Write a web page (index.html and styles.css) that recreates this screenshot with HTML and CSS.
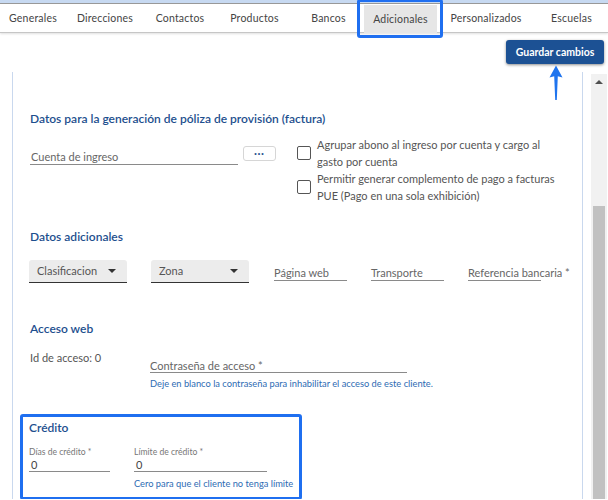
FILE: index.html
```html
<!DOCTYPE html>
<html lang="es">

<head>
    <meta charset="UTF-8">
    <meta name="viewport" content="width=device-width, initial-scale=1.0">
    <title>Cliente - Adicionales</title>
    <link rel="stylesheet" href="styles.css">
</head>

<body>
    <div class="topstrip"></div>
    <nav class="tabs">
        <a class="tab">Generales</a>
        <a class="tab">Direcciones</a>
        <a class="tab">Contactos</a>
        <a class="tab">Productos</a>
        <a class="tab">Bancos</a>
        <a class="tab active">Adicionales</a>
        <a class="tab">Personalizados</a>
        <a class="tab">Escuelas</a>
    </nav>

    <div class="toolbar">
        <button class="save">Guardar cambios</button>
        <svg class="pointer" width="16" height="36" viewBox="0 0 16 36">
            <path d="M8 0.5 L14.5 12.5 L9.8 11.2 L8.8 35 L7.2 35 L6.2 11.2 L1.5 12.5 Z" fill="#1f74ee" />
        </svg>
    </div>

    <div class="workarea">
        <div class="panel">
            <h2 class="section-title">Datos para la generación de póliza de provisión (factura)</h2>
            <div class="row poliza">
                <div class="field cuenta"><span>Cuenta de ingreso</span></div>
                <button class="dots">&bull;&bull;&bull;</button>
                <div class="checks">
                    <label class="check"><span class="box"></span><span>Agrupar abono al ingreso por cuenta y cargo al gasto por cuenta</span></label>
                    <label class="check"><span class="box"></span><span>Permitir generar complemento de pago a facturas PUE (Pago en una sola exhibición)</span></label>
                </div>
            </div>

            <h2 class="section-title adicionales">Datos adicionales</h2>
            <div class="row extras">
                <div class="select">Clasificacion <span class="caret"></span></div>
                <div class="select">Zona <span class="caret"></span></div>
                <div class="field short"><span>Página web</span></div>
                <div class="field short"><span>Transporte</span></div>
                <div class="field short"><span>Referencia bancaria *</span></div>
            </div>

            <h2 class="section-title acceso-title">Acceso web</h2>
            <div class="row acceso">
                <div class="id">Id de acceso: 0</div>
                <div class="pass">
                    <div class="field password"><span>Contraseña de acceso *</span></div>
                    <p class="hint">Deje en blanco la contraseña para inhabilitar el acceso de este cliente.</p>
                </div>
            </div>

            <section class="credito">
                <h2 class="section-title">Crédito</h2>
                <div class="row">
                    <div class="small-field dias">
                        <label>Días de crédito *</label>
                        <div class="value">0</div>
                    </div>
                    <div class="small-field limite">
                        <label>Límite de crédito *</label>
                        <div class="value">0</div>
                        <p class="hint">Cero para que el cliente no tenga límite</p>
                    </div>
                </div>
            </section>
        </div>
        <div class="scrollbar">
            <span class="up"></span>
            <span class="thumb"></span>
        </div>
    </div>
</body>

</html>
```

FILE: styles.css
```css
* {
    margin: 0px;
    padding: 0px;
    box-sizing: border-box;
}

body {
    font-family: Lato, "Open Sans", sans-serif;
    font-size: 11px;
    color: #555;
    background-color: white;
    overflow: hidden;
}

.topstrip {
    height: 4px;
    background-color: #c7d9f1;
    border-bottom: 1px solid #9a9a9a;
}

.tabs {
    display: grid;
    grid-template-columns: 66px 78px 72px 77px 71px 73px 98px 73px;
    height: 29px;
    border-bottom: 1px solid #c6c6c6;
    box-shadow: 0 1px 2px rgba(0, 0, 0, 0.12);
}

.tab {
    text-align: center;
    line-height: 28px;
    font-size: 10.5px;
    color: #444;
    letter-spacing: 0.2px;
}

.tab.active {
    position: relative;
    background-color: #e6e6e6;
    margin-top: 1px;
}

/* highlight around the active tab */
.tab.active::after {
    content: "";
    position: absolute;
    left: -7px;
    right: -6px;
    top: -6px;
    bottom: -5px;
    border: 3px solid #1f6ff0;
    border-radius: 3px;
}

.toolbar {
    position: relative;
    display: flex;
    justify-content: flex-end;
    padding: 7px 4px 8px 0;
}

.save {
    width: 98px;
    height: 24px;
    border: none;
    border-radius: 3px;
    background-color: #1c5194;
    color: white;
    font-family: Lato, sans-serif;
    font-weight: bold;
    font-size: 10.5px;
    box-shadow: 0 1px 3px rgba(0, 0, 0, 0.45);
}

.pointer {
    position: absolute;
    left: 548px;
    top: 32px;
}

.workarea {
    display: flex;
    height: 427px;
    overflow: hidden;
}

.panel {
    width: 571px;
    margin-left: 12px;
    border-left: 1px solid #c9d8ee;
    border-right: 1px solid #c9d8ee;
    padding: 39px 10px 0 17px;
}

.section-title {
    font-size: 12px;
    font-weight: 600;
    line-height: 16px;
    color: #1d4f8e;
}

.row {
    display: flex;
}

.poliza {
    margin-top: 9px;
}

.field {
    border-bottom: 1px solid #8a8a8a;
    line-height: 14px;
    color: #666;
    white-space: nowrap;
}

.cuenta {
    width: 208px;
    height: 29px;
    padding: 14px 0 0 1px;
    align-self: flex-start;
}

.dots {
    width: 33px;
    height: 15px;
    margin: 10px 0 0 5px;
    border: 1px solid #d6d6d6;
    border-radius: 3px;
    background-color: white;
    color: #1d4f8e;
    font-size: 7px;
    letter-spacing: 1px;
}

.checks {
    margin-left: 21px;
}

.check {
    display: flex;
    align-items: center;
    width: 260px;
    line-height: 17px;
    color: #555;
}

.check .box {
    flex: none;
    width: 14px;
    height: 14px;
    border: 1px solid #555;
    border-radius: 2px;
    margin-right: 6px;
}

.adicionales {
    margin-top: 25px;
}

.extras {
    margin-top: 15px;
    gap: 24px;
    align-items: flex-start;
}

.select {
    position: relative;
    width: 98px;
    height: 23px;
    margin-left: -1px;
    padding-left: 8px;
    line-height: 22px;
    background-color: #ececec;
    border-bottom: 1px solid #333;
    border-radius: 3px 3px 0 0;
    color: #555;
}

.select + .select {
    margin-left: 0;
}

.caret {
    position: absolute;
    right: 11px;
    top: 9px;
    border-left: 4px solid transparent;
    border-right: 4px solid transparent;
    border-top: 4px solid #333;
}

.short {
    width: 73px;
    height: 21px;
    padding-top: 6px;
    margin-left: 1px;
}

.short + .short {
    margin-left: 0;
}

.acceso-title {
    margin-top: 38px;
}

.acceso {
    margin-top: 13px;
}

.id {
    width: 120px;
    line-height: 16px;
    color: #555;
}

.password {
    width: 257px;
    height: 23px;
    padding-top: 9px;
}

.hint {
    margin-top: 5px;
    font-size: 9.3px;
    line-height: 12px;
    color: #2d6bb3;
    white-space: nowrap;
}

.credito {
    width: 282px;
    margin: 24px 0 0 -10px;
    padding: 3px 6px 7px 6px;
    border: 3px solid #1f6ff0;
    border-radius: 3px;
}

.credito .row {
    gap: 24px;
    margin-top: 11px;
}

.small-field label {
    display: block;
    font-size: 8.6px;
    line-height: 11px;
    color: #777;
}

.small-field .value {
    border-bottom: 1px solid #8a8a8a;
    padding: 1px 0 0 2px;
    line-height: 12px;
    font-size: 11px;
    color: #444;
}

.dias {
    width: 81px;
}

.limite {
    width: 133px;
}

.credito .hint {
    margin-top: 6px;
    font-size: 9.3px;
}

.scrollbar {
    position: relative;
    width: 16px;
    margin: 2px 0 0 8px;
    background-color: #f1f1f1;
}

.up {
    position: absolute;
    left: 4px;
    top: 6px;
    border-left: 4px solid transparent;
    border-right: 4px solid transparent;
    border-bottom: 4px solid #505050;
}

.thumb {
    position: absolute;
    left: 2px;
    right: 2px;
    top: 132px;
    bottom: 0;
    background-color: #c1c1c1;
}
```
